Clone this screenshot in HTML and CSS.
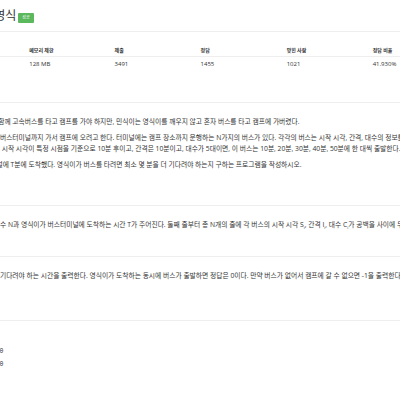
FILE: index.html
```html
<!DOCTYPE html>
<html lang="ko">
<head>
    <meta charset="UTF-8">
    <meta name="viewport" content="width=device-width, initial-scale=1.0">
    <title>캠프가는 영식</title>
    <link rel="stylesheet" href="styles.css">
</head>
<body>
    <div class="wrapper">
        <div class="page-header">
            <h1><span class="problem-title">캠프가는 영식</span><span class="label-success">성공</span></h1>
        </div>

        <table class="problem-info">
            <thead>
                <tr>
                    <th>시간 제한</th>
                    <th>메모리 제한</th>
                    <th>제출</th>
                    <th>정답</th>
                    <th>맞힌 사람</th>
                    <th>정답 비율</th>
                </tr>
            </thead>
            <tbody>
                <tr>
                    <td>2 초</td>
                    <td>128 MB</td>
                    <td>3491</td>
                    <td>1455</td>
                    <td>1021</td>
                    <td>41.930%</td>
                </tr>
            </tbody>
        </table>

        <section class="problem-section section-description">
            <h2 class="headline">문제</h2>
            <div class="section-text">
                <p>영식이는 민식이와 함께 고속버스를 타고 캠프를 가야 하지만, 민식이는 영식이를 깨우지 않고 혼자 버스를 타고 캠프에 가버렸다.</p>
                <p>영식이는 이제 혼자 버스터미널까지 가서 캠프에 오려고 한다. 터미널에는 캠프 장소까지 운행하는 N가지의 버스가 있다. 각각의 버스는 시작 시각, 간격, 대수의 정보를 가지고 있다.<br>예를 들어서, 버스의 시작 시각이 특정 시점을 기준으로 10분 후이고, 간격은 10분이고, 대수가 5대이면, 이 버스는 10분, 20분, 30분, 40분, 50분에 한 대씩 출발한다.</p>
                <p>영식이는 버스터미널에 T분에 도착했다. 영식이가 버스를 타려면 최소 몇 분을 더 기다려야 하는지 구하는 프로그램을 작성하시오.</p>
            </div>
        </section>

        <section class="problem-section section-input">
            <h2 class="headline">입력</h2>
            <div class="section-text">
                <p>첫째 줄에 버스의 개수 N과 영식이가 버스터미널에 도착하는 시간 T가 주어진다. 둘째 줄부터 총 N개의 줄에 각 버스의 시작 시각 S<sub>i</sub>, 간격 I<sub>i</sub>, 대수 C<sub>i</sub>가 공백을 사이에 두고 주어진다.</p>
            </div>
        </section>

        <section class="problem-section section-output">
            <h2 class="headline">출력</h2>
            <div class="section-text">
                <p>첫째 줄에 영식이가 기다려야 하는 시간을 출력한다. 영식이가 도착하는 동시에 버스가 출발하면 정답은 0이다. 만약 버스가 없어서 캠프에 갈 수 없으면 -1을 출력한다.</p>
            </div>
        </section>

        <section class="problem-section section-sample">
            <h2 class="headline">예제 입력 1</h2>
            <div class="section-text">
<pre class="sampledata">2 1000000
100000 10000 10
200000 10000 50</pre>
            </div>
        </section>
    </div>
</body>
</html>
```

FILE: styles.css
```css
html, body {
    margin: 0;
    padding: 0;
}

body {
    font-family: "Open Sans", "Noto Sans CJK KR", sans-serif;
    color: #333;
    background: #fff;
    width: 400px;
    height: 400px;
    overflow: hidden;
}

.wrapper {
    margin-left: -63px; /* page is scrolled, first column is off screen */
    width: 900px;
}

/* title */
.page-header {
    padding: 8px 0 7px 10px;
    border-bottom: 1px solid #eee;
}

.page-header h1 {
    margin: 0;
    display: flex;
    align-items: center;
    height: 16px;
    font-size: 12px;
    font-weight: 400;
    line-height: 16px;
}

.label-success {
    margin-left: 2px;
    margin-top: 3px;
    padding: 0 4px;
    height: 10px;
    line-height: 10px;
    background: #5cb85c;
    color: #fff;
    font-size: 4px;
    border-radius: 1px;
}

/* info table */
.problem-info {
    margin-top: 10px;
    width: 516px;
    border-collapse: collapse;
    font-size: 6px;
}

.problem-info th,
.problem-info td {
    width: 86px;
    padding: 0 8px;
    text-align: left;
}

.problem-info th {
    height: 14px;
    font-size: 5px;
    font-weight: 700;
    border-bottom: 1px solid #eee;
}

.problem-info td {
    height: 14px;
}

/* sections */
.headline {
    margin: 0;
    padding-left: 8px;
    height: 20px;
    line-height: 20px;
    font-size: 8px;
    font-weight: 400;
    border-bottom: 1px solid #eee;
}

.section-description { margin-top: 11px; }
.section-input { margin-top: 15px; }
.section-output { margin-top: 6px; }
.section-sample { margin-top: 19px; }

.section-text {
    padding: 13px 8px 0;
    display: flex;
    flex-direction: column;
    gap: 5px;
}

.section-text p {
    margin: 0;
    font-size: 6.75px;
    line-height: 11px;
    white-space: nowrap;
}

.section-text sub {
    font-size: 4px;
    line-height: 0;
}

.section-sample .section-text {
    padding-top: 11px;
}

.sampledata {
    margin: 0;
    padding: 0;
    font-family: "Liberation Mono", monospace;
    font-size: 6.5px;
    line-height: 13px;
}
```
